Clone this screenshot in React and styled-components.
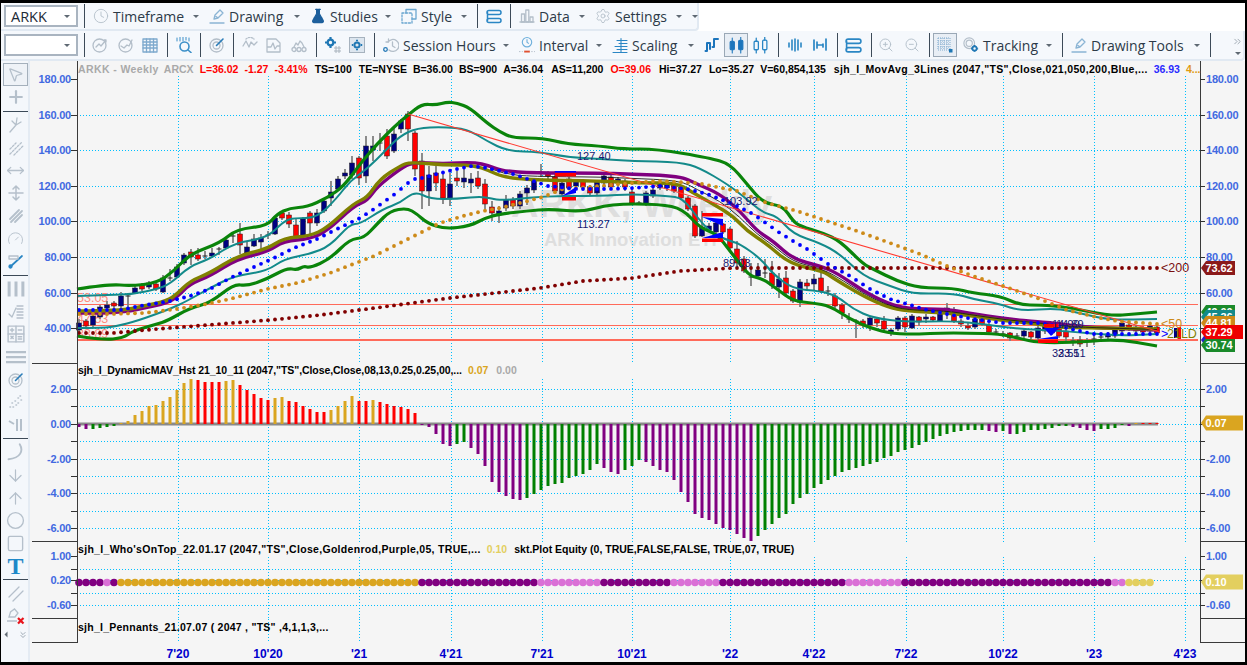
import React from 'react';
import styled, { createGlobalStyle } from 'styled-components';
import {
  Clock, FlaskConical, Settings, MousePointer2, Plus, MoveHorizontal,
  ArrowDown, ArrowUp, Circle, Square, ChevronsRight, ZoomIn, ZoomOut, Gauge
} from 'lucide-react';

const GlobalStyle = createGlobalStyle`
  html, body { margin: 0; padding: 0; background: #000; }
  #root { width: 1247px; height: 665px; overflow: hidden; }
`;

/* ---------- data, all in screen pixels of the reference ---------- */
const barX = i => 79 + 7 * i;
const BAR_COUNT = 155;

const greenTop = [[77,288],[110,283],[130,285],[157,282],[174,270],[190,253],[220,242],[237,228],[267,225],[277,213],[290,207],[307,206],[327,197],[344,185],[360,163],[377,143],[395,125],[408,114],[422,103],[436,104],[447,101],[457,102],[470,107],[487,122],[500,131],[513,137],[543,137],[567,143],[600,145],[623,148],[657,148],[710,157],[730,163],[747,183],[763,202],[783,205],[793,220],[800,225],[823,232],[840,240],[863,263],[873,268],[897,280],[920,287],[953,287],[973,292],[1000,295],[1020,304],[1040,304],[1067,306],[1110,315],[1135,313],[1157,311]];
const tealTop = [[77,295],[110,294],[134,293],[157,288],[170,283],[190,265],[210,258],[234,242],[267,237],[284,220],[294,217],[317,217],[337,197],[350,180],[367,168],[385,150],[400,135],[417,127],[443,126],[467,128],[487,140],[507,150],[540,151],[567,156],[600,158],[633,160],[680,161],[700,167],[727,183],[743,195],[763,212],[777,215],[793,233],[820,242],[840,253],[863,275],[890,285],[913,293],[953,292],[973,298],[1000,303],[1020,310],[1057,307],[1083,313],[1110,319],[1157,318]];
const purpleBand = [[77,312],[120,312],[144,307],[167,302],[177,296],[190,283],[210,275],[237,258],[267,251],[284,240],[310,238],[327,230],[354,205],[367,200],[377,186],[400,168],[413,161],[443,163],[473,161],[490,165],[503,170],[533,172],[600,172],[627,173],[680,175],[697,183],[720,193],[740,210],[757,230],[773,240],[793,258],[820,265],[837,272],[863,290],[887,302],[907,308],[947,308],[967,312],[1007,318],[1040,321],[1053,322],[1083,326],[1133,328],[1157,329]];
const oliveBand = [[77,310],[120,310],[144,305],[167,300],[177,293],[190,280],[210,272],[237,255],[267,248],[284,237],[310,235],[327,227],[354,202],[367,197],[380,178],[400,165],[410,161],[443,164],[473,164],[490,170],[503,176],[533,179],[600,180],[640,182],[677,182],[690,190],[713,203],[733,215],[747,230],[767,243],[790,263],[823,270],[833,277],[863,295],[887,306],[907,310],[947,312],[973,315],[1007,320],[1040,323],[1050,326],[1100,327],[1157,328]];
const tealLow = [[77,327],[103,327],[117,325],[137,320],[170,308],[187,300],[210,287],[234,275],[267,270],[284,258],[310,253],[330,245],[350,223],[360,223],[383,208],[400,202],[415,190],[430,198],[457,198],[483,195],[500,200],[543,195],[600,195],[633,193],[667,195],[683,197],[700,220],[713,233],[730,240],[740,243],[760,257],[773,273],[793,288],[820,290],[837,295],[853,308],[873,317],[907,321],[953,320],[983,323],[1017,328],[1067,330],[1117,335],[1157,333]];
const greenLow = [[77,335],[103,339],[123,337],[133,330],[157,323],[167,320],[190,307],[210,302],[234,283],[247,285],[267,278],[287,267],[297,269],[304,265],[310,267],[330,258],[350,238],[364,237],[377,223],[390,210],[407,207],[417,213],[427,222],[445,228],[470,225],[485,217],[500,213],[527,210],[550,208],[583,211],[610,203],[660,203],[683,208],[700,227],[717,233],[730,250],[740,263],[750,275],[763,278],[777,288],[793,300],[813,302],[830,305],[850,318],[870,327],[893,333],[920,333],[940,332],[967,332],[1000,333],[1017,337],[1040,342],[1083,341],[1117,338],[1157,345]];
const blueDots = [[77,309],[120,309],[140,305],[170,300],[190,295],[210,288],[234,275],[254,266],[274,257],[294,247],[317,238],[337,228],[360,217],[374,208],[395,193],[408,182],[415,178],[422,177],[437,173],[457,168],[472,165],[487,167],[500,170],[513,173],[548,185],[577,188],[610,188],[633,187],[660,185],[687,188],[707,193],[733,203],[753,213],[780,232],[793,240],[807,248],[828,263],[850,275],[870,288],[890,298],[907,303],[927,309],[947,313],[973,318],[1003,322],[1040,322],[1067,327],[1093,333],[1157,333]];
const goldDots = [[77,313],[110,313],[144,312],[177,308],[207,303],[234,297],[267,288],[297,282],[330,272],[374,255],[440,222],[463,215],[483,210],[500,207],[520,202],[543,196],[563,188],[600,185],[633,182],[657,180],[697,182],[737,190],[767,202],[797,210],[857,230],[890,242],[920,253],[947,265],[973,275],[1003,285],[1040,298],[1067,309],[1100,317],[1117,320],[1157,323]];
const maroonDots = [[79,332],[113,332],[157,328],[220,323],[270,319],[320,314],[367,308],[450,297],[540,287],[583,280],[633,277],[680,270],[733,267],[1157,267]];

// [body top, body bottom, wick top, wick bottom, navy?]
const candles = [
  [322,329,318,332,1],[320,325,318,328,0],[315,324,312,326,1],[306,316,304,318,1],[304,307,300,310,1],[302,305,300,308,0],[295,305,291,309,1],[295,295,292,311,1],
  [287,292,285,293,1],[284,288,282,290,0],[282,286,280,288,1],[283,288,281,290,0],[277,291,274,292,1],[277,277,268,280,1],[266,276,263,277,1],[254,262,252,264,1],
  [251,256,248,264,0],[254,258,247,260,0],[255,255,250,258,1],[252,255,247,256,1],[248,248,246,254,1],[239,247,236,248,1],[235,235,233,242,1],[233,244,222,253,0],
  [246,252,241,256,1],[238,245,233,246,1],[237,241,233,248,1],[234,234,230,238,1],[217,233,215,234,1],[212,217,210,219,0],[214,223,211,227,0],[224,236,218,238,0],
  [218,236,216,237,1],[212,222,210,234,0],[212,222,208,225,1],[200,210,198,212,1],[191,197,180,205,1],[178,188,175,190,1],[172,175,168,178,1],[162,174,155,178,1],
  [157,177,155,184,0],[145,175,135,182,1],[145,149,135,160,1],[142,142,132,150,1],[135,155,128,158,0],[133,150,127,152,1],[120,128,118,132,1],[113,128,110,140,0],
  [132,168,130,175,0],[160,190,152,208,0],[174,190,165,205,1],[172,182,165,190,0],[178,197,172,203,0],[183,197,172,205,1],[177,180,170,185,0],[177,181,167,187,1],
  [178,182,172,192,1],[177,185,170,188,0],[183,203,178,208,0],[206,212,200,220,0],[210,214,205,222,1],[199,207,194,210,1],[199,205,196,208,0],[193,205,190,208,1],
  [187,192,184,204,1],[180,189,178,192,1],[172,172,163,176,1],[172,175,170,178,0],[176,190,170,192,0],[182,193,178,195,1],[178,187,176,189,0],[180,185,178,188,1],
  [180,186,178,188,0],[186,192,184,194,0],[181,192,179,194,1],[175,182,172,184,1],[176,186,172,188,0],[178,182,176,186,1],[180,186,178,190,0],[191,202,188,204,0],
  [202,202,200,203,1],[192,203,190,205,1],[189,195,185,197,1],[183,187,181,189,1],[183,187,181,190,1],[184,190,182,192,0],[186,197,184,199,0],[197,208,195,210,0],
  [205,235,203,237,0],[226,235,210,236,1],[225,229,222,231,1],[222,231,218,233,1],[223,231,222,233,0],[228,247,226,250,0],[248,262,240,265,0],[258,270,255,272,0],
  [276,276,262,285,1],[269,275,262,277,1],[272,272,258,277,1],[272,284,260,288,0],[278,286,272,297,1],[277,292,270,296,0],[290,300,288,302,0],[281,301,278,306,1],
  [282,285,278,290,0],[278,283,273,290,1],[277,290,272,292,0],[290,290,285,295,1],[295,305,292,307,0],[304,312,302,318,0],[318,318,312,322,1],[320,320,318,337,1],
  [320,323,318,327,0],[317,324,316,330,1],[318,322,316,326,0],[320,328,315,330,0],[329,332,327,335,1],[317,328,315,330,1],[317,326,315,331,0],[315,327,313,328,1],
  [316,321,315,325,0],[316,318,313,322,1],[316,319,315,321,0],[310,320,308,321,1],[307,311,302,318,1],[312,320,306,322,0],[320,323,318,326,0],[325,327,322,329,0],
  [318,326,316,328,1],[318,323,316,325,0],[324,331,322,333,0],[331,331,328,334,1],[333,333,330,336,1],[332,337,331,340,0],[335,335,332,338,1],[330,335,327,337,1],
  [331,336,330,338,0],[327,337,325,339,1],[322,330,320,333,1],[326,332,324,334,0],[328,335,326,337,0],[330,336,328,340,0],[340,340,336,345,1],[339,343,335,346,0],
  [340,340,337,346,1],[338,338,334,344,1],[336,336,333,340,1],[333,336,331,338,1],[329,335,327,337,1],[322,330,320,331,1],[324,328,322,330,0],[326,330,324,332,0],
  [327,331,325,333,0],[325,330,323,332,1],[326,332,324,334,0]
];

const histogram = [
  -3,-5,-5,-4,-3,-2,1,3,9,13,18,19,23,27,34,41,45,44,42,42,42,43,44,39,34,30,26,24,26,27,23,22,18,15,12,12,14,18,23,28,23,23,24,22,20,18,17,15,11,
  -1,-3,-10,-20,-22,-20,-18,-24,-30,-42,-58,-68,-72,-75,-76,-74,-70,-66,-62,-60,-59,-54,-52,-50,-46,-40,-44,-48,-50,-46,-42,-36,-38,-42,-46,-48,-56,-68,-78,-90,-94,-96,-100,-104,-106,-110,-114,-117,-112,-106,-100,-94,-90,-80,-74,-70,-64,-60,-56,-52,-48,-46,-44,-42,-40,-38,-34,-32,-28,-26,-24,-21,-18,-15,-12,-10,-8,-7,-6,-6,-6,-7,-8,
  -7,-10,-10,-8,-6,-6,-5,-4,-2,-2,-3,-4,-6,-7,-5,-5,-4,-1,-2,1,1,1,1
];

const dotRuns = [
  [4,'#800080'],[1,'#da70d6'],[1,'#800080'],[43,'#daa520'],[17,'#800080'],[9,'#da70d6'],[10,'#800080'],[7,'#da70d6'],[18,'#800080'],
  [8,'#da70d6'],[30,'#800080'],[2,'#da70d6'],[4,'#e3cf5f']
];

const dates = [[178,"7'20"],[268,"10'20"],[359,"'21"],[451,"4'21"],[542,"7'21"],[632,"10'21"],[730,"'22"],[814,"4'22"],[906,"7'22"],[1003,"10'22"],[1094,"'23"],[1185,"4'23"]];

const sample = (points, x) => {
  if (x <= points[0][0]) return points[0][1];
  for (let i = 1; i < points.length; i++) {
    if (x <= points[i][0]) {
      const [x0, y0] = points[i - 1];
      const [x1, y1] = points[i];
      return y0 + ((y1 - y0) * (x - x0)) / (x1 - x0);
    }
  }
  return points[points.length - 1][1];
};
// rounded line through the midpoints, the study lines have no hard corners
const toCurve = points => {
  let d = `M${points[0][0]} ${points[0][1]}`;
  for (let i = 1; i < points.length - 1; i++) {
    const [x, y] = points[i];
    const [nx, ny] = points[i + 1];
    d += `Q${x} ${y} ${(x + nx) / 2} ${(y + ny) / 2}`;
  }
  const last = points[points.length - 1];
  return `${d}L${last[0]} ${last[1]}`;
};
const blackBand = purpleBand.filter(p => p[0] >= 490).map(p => [p[0], (p[1] + sample(oliveBand, p[0])) / 2]);

/* ---------- page ---------- */
const Frame = styled.div`
  width: 1247px;
  height: 665px;
  box-sizing: border-box;
  padding: 3px 2px 3px 1px;
  background: #000;
`;
const Window = styled.div`
  height: 100%;
  background: #fff;
  display: flex;
  flex-direction: column;
  overflow: hidden;
  font-family: "Open Sans", "Liberation Sans", sans-serif;
`;
const Toolbar = styled.div`
  height: ${p => p.$h}px;
  width: ${p => p.$w}px;
  box-sizing: border-box;
  flex: none;
  display: flex;
  align-items: center;
  padding-left: 3px;
  background: #f5f8fc;
  border: solid #e1e9f2;
  border-width: 0 2px 2px 0;
  border-radius: 0 0 4px 0;
`;
const ComboBox = styled.div`
  width: 74px;
  height: 22px;
  flex: none;
  box-sizing: border-box;
  border: 2px solid #a9b4c0;
  background: #fff;
  display: flex;
  align-items: center;
  justify-content: space-between;
  padding: 0 6px 0 5px;
  font-size: 14.5px;
  color: #1d2a36;
`;
const Sep = styled.div`
  width: 1px;
  height: 24px;
  flex: none;
  background: #3c4a58;
  margin-left: ${p => p.$ml ?? 8}px;
`;
const Caret = styled.span`
  display: block;
  flex: none;
  width: 0;
  height: 0;
  border: solid transparent;
  border-width: 3.5px 3px 0;
  border-top-color: #5f6973;
`;
const Menu = styled.div`
  width: ${p => p.$w}px;
  box-sizing: border-box;
  flex: none;
  display: flex;
  align-items: center;
  gap: 4px;
  padding-right: 10px;
  margin-left: ${p => p.$ml ?? 0}px;
  font-size: 14px;
  color: #2c3a48;
  white-space: nowrap;
  ${Caret} { margin-left: auto; }
`;
const Tool = styled.span`
  display: flex;
  flex: none;
  align-items: center;
  justify-content: center;
  margin-left: ${p => p.$ml ?? 8}px;
  width: ${p => p.$w ?? 16}px;
  height: ${p => (p.$on ? 24 : 20)}px;
  box-sizing: border-box;
  color: ${p => p.$c ?? '#b3bec9'};
  ${p => p.$on && 'border: 1px solid #9aa8b6; background: #e8eef5;'}
`;
const Overflow = styled.div`
  margin-left: 21px;
  width: 14px;
  display: flex;
  flex-direction: column;
  align-items: center;
  gap: 5px;
  color: #9aa4ae;
`;
const Workspace = styled.div`
  flex: 1;
  display: flex;
  min-height: 0;
`;
const Toolbox = styled.div`
  width: 29px;
  flex: none;
  box-sizing: border-box;
  padding: 2px 0 0 2px;
  background: #f4f7fb;
  border-right: 2px solid #e4ebf3;
  display: flex;
  flex-direction: column;
  align-items: center;
`;
const BoxTool = styled.span`
  height: ${p => (p.$on ? 23 : 22.7)}px;
  width: 25px;
  flex: none;
  box-sizing: border-box;
  display: flex;
  align-items: center;
  justify-content: center;
  color: ${p => p.$c ?? '#b5c0cb'};
  ${p => p.$on && 'border: 1px solid #a4b0bc; background: #eef2f7;'}
`;
const BoxRule = styled.div`
  width: 25px;
  height: 1px;
  flex: none;
  background: #3c4a58;
  margin: 2px 0;
`;
const TextTool = styled(BoxTool)`
  font: bold 24px "Liberation Serif", serif;
`;
const BoxNav = styled.div`
  margin-top: 2px;
  width: 25px;
  display: flex;
  justify-content: space-between;
  align-items: center;
  color: #8d99a5;
`;
const LeftCaret = styled(Caret)`
  transform: rotate(90deg);
`;
const DownChevrons = styled(ChevronsRight)`
  transform: rotate(90deg);
`;
const Chart = styled.div`
  flex: 1;
  background: #f5f5f5;
  display: flex;
  flex-direction: column;
`;
const Pane = styled.div`
  position: relative;
  height: ${p => p.$h}px;
  flex: none;
`;
const PaneSvg = styled.svg`
  display: block;
`;
const PaneTitle = styled.div`
  position: absolute;
  top: ${p => p.$top ?? 2}px;
  left: 48px;
  display: flex;
  gap: 6px;
  font: bold 10.5px/13px "Liberation Sans", sans-serif;
  color: #000;
  white-space: nowrap;
`;
const Reading = styled.span`
  color: ${p => p.$c ?? '#000'};
  margin-left: ${p => p.$ml ?? 0}px;
  letter-spacing: ${p => p.$ls ?? 0}px;
`;
const ScaleText = styled.text`
  font: bold 11px "Liberation Sans", sans-serif;
  letter-spacing: -0.2px;
  fill: #4169e1;
`;
const DateText = styled.text`
  font: bold 12px "Liberation Sans", sans-serif;
  fill: #0000cd;
  text-anchor: middle;
`;
const TagText = styled.text`
  font: bold 11px "Liberation Sans", sans-serif;
  letter-spacing: -0.1px;
  fill: #fff;
`;
const ChartText = styled.text`
  font: 11px "Liberation Sans", sans-serif;
  fill: ${p => p.$c ?? '#191970'};
`;
const StudyLabel = styled.text`
  font: 12.5px "Liberation Sans", sans-serif;
  fill: ${p => p.$c};
`;
const Watermark = styled.text`
  font: bold ${p => p.$size}px "Liberation Sans", sans-serif;
  fill: #dedede;
`;

/* ---------- small drawn icons ---------- */
const Ico = ({ children, w = 16, h = 16, fill = 'none', sw = 1.3 }) => (
  <svg width={w} height={h} viewBox="0 0 16 16" fill={fill} stroke="currentColor" strokeWidth={sw} strokeLinecap="round" strokeLinejoin="round">
    {children}
  </svg>
);
const LayoutIcon = () => (
  <Ico w={17} h={17} sw={1.5}>
    <path d="M3 2h10a1.5 1.5 0 0 1 0 4H3a1.5 1.5 0 0 1 0-4zM3 10h10a1.5 1.5 0 0 1 0 4H3a1.5 1.5 0 0 1 0-4zM1.5 4v8" />
  </Ico>
);
const CandlesFilled = () => (
  <Ico w={17} h={17} fill="currentColor" sw={1}>
    <path d="M4 1v14M12 0v15" /><rect x="2" y="4" width="4" height="8" rx="1" /><rect x="10" y="3" width="4" height="9" rx="1" />
  </Ico>
);
const CandlesOutline = () => (
  <Ico w={17} h={17} sw={1.2}>
    <path d="M4 1v3M4 12v3M12 0v3M12 12v3" /><rect x="2" y="4" width="4" height="8" rx="1" /><rect x="10" y="3" width="4" height="9" rx="1" />
  </Ico>
);
const StepChart = () => (
  <Ico sw={2}><path d="M3 14V6h3v6M3 14H1.5M10 10V2h4M10 10H8.5" /></Ico>
);
const WaveBars = () => (
  <Ico sw={1.6}><path d="M2 6v4M5 3v10M8 2v12M11 3v10M14 6v4" /></Ico>
);
const WaveGap = () => (
  <Ico sw={1.7}><path d="M2 3v10M5 5v6M11 7v3M14 2v11M6 8h4" /></Ico>
);
const DataIcon = () => (
  <Ico><path d="M1 14h14" /><rect x="2.5" y="6" width="3" height="8" /><rect x="6.8" y="2" width="3" height="12" /><rect x="11" y="9" width="3" height="5" /></Ico>
);
const StyleIcon = () => (
  <Ico><rect x="1" y="5" width="10" height="10" strokeDasharray="2 1.6" /><path d="M5 5V1.5h10V11h-4" /></Ico>
);
const NibIcon = () => (
  <Ico><path d="M5 11l1-4 5-5 3 3-5 5zM7 8.5l1.5 1M1 15h14" /></Ico>
);
const ChartCircle = ({ up }) => (
  <Ico><circle cx="7.5" cy="8.5" r="6.5" /><path d={up ? 'M4 10l3-3 2 2 5-6M12 3h2v2' : 'M3 9l3 2 3-3 2 1 3-6'} /></Ico>
);
const GridIcon = () => (
  <Ico><rect x="1" y="2" width="14" height="13" /><path d="M1 5h14M1 8h14M1 11h14M4.5 2v13M8 2v13M11.5 2v13" /></Ico>
);
const SearchGrid = () => (
  <Ico sw={1.6}><path d="M1 1v3M4 0v4M7 0v4M10 0v3M13 1v3" strokeWidth="1" /><circle cx="8.5" cy="9.5" r="4.5" /><path d="M12 13l3 2.5" /></Ico>
);
const RadarIcon = () => (
  <Ico><circle cx="7.5" cy="8.5" r="6.5" /><circle cx="7.5" cy="8.5" r="3.5" /><path d="M7.5 8.5L14 2" stroke="#2a7cb8" strokeWidth="1.6" /></Ico>
);
const PulseIcon = () => (
  <Ico><path d="M1 9l3-5 3 6 2-5 3 3 3-3" /><path d="M4 2a6 6 0 0 1 8 0" strokeDasharray="1.4 1.4" /></Ico>
);
const BoxPulse = () => (
  <Ico><path d="M1 15V2h9l4 4v9zM1 10h4l2-4 2 6 2-3h3" /></Ico>
);
const NetIcon = () => (
  <Ico><circle cx="3" cy="12.5" r="2" /><circle cx="8" cy="12.5" r="2" /><circle cx="13" cy="12.5" r="2" /><path d="M3 10l2-4 2 2 2-4 2 2 2 4" /></Ico>
);
const GearHash = () => (
  <svg width="16" height="16" viewBox="0 0 16 16">
    <g fill="none" stroke="#1f77b4" strokeWidth="2.2"><circle cx="5.5" cy="5.5" r="2.8" /><path d="M5.5 0v2M5.5 9v2M0 5.5h2M9 5.5h2" /></g>
    <path d="M11 9v7M14 9v7M9 11h7M9 14h7" stroke="#aab4be" strokeWidth="1" />
  </svg>
);
const GearBox = () => (
  <svg width="16" height="16" viewBox="0 0 16 16">
    <rect x="0.5" y="0.5" width="15" height="15" fill="#dde6ef" stroke="#a6b2be" />
    <g fill="none" stroke="#1f77b4" strokeWidth="2"><circle cx="8" cy="8" r="2.6" /><path d="M8 2.8v1.4M8 11.8v1.4M2.8 8h1.4M11.8 8h1.4" /></g>
  </svg>
);
const SessionIcon = () => (
  <Ico><path d="M5 5a6 6 0 1 1 1 8" /><path d="M3 5h2.5V2M9.5 5v4l2.5 1.5" /><circle cx="2.5" cy="12.5" r="1.8" stroke="#2a7cb8" /></Ico>
);
const IntervalIcon = () => (
  <svg width="17" height="18" viewBox="0 0 17 18" fill="none">
    <circle cx="8.5" cy="6" r="5" stroke="#6fb0dc" strokeWidth="1.2" />
    <path d="M8.5 3v3l2 1.5" stroke="#6fb0dc" strokeWidth="1.2" />
    <path d="M0 16h4M13 16h4" stroke="#b3bec9" strokeDasharray="1.5 1.5" />
    <path d="M5.5 16h6" stroke="#e05030" strokeWidth="2" />
  </svg>
);
const ScalingIcon = () => (
  <Ico w={17} h={17} sw={1.1}><path d="M9 1v14M5 3h10M7 6h8M3 9h12M5 12h10M1 15h14" /></Ico>
);
const TrackingIcon = () => (
  <svg width="18" height="18" viewBox="0 0 18 18" fill="none">
    <g stroke="#b3bec9" strokeWidth="1.3"><circle cx="7" cy="7" r="6" /><circle cx="7" cy="7" r="3.5" /></g>
    <g stroke="#1f77b4" strokeWidth="2"><circle cx="13" cy="13" r="2.4" /><path d="M13 9v1M13 16v1M9 13h1M16 13h1" /></g>
  </svg>
);
const GridPicked = () => (
  <svg width="16" height="16" viewBox="0 0 16 16" fill="none" stroke="#7ea9cd" strokeDasharray="1 1">
    <path d="M1 1h12M1 4h12M1 7h12M1 10h12M1 13h12M1 1v12M4 1v12M7 1v12M10 1v12M13 1v12" />
    <rect x="12" y="12" width="3.5" height="3.5" fill="#1f77b4" stroke="none" />
  </svg>
);
const Pitchfork = () => (
  <Ico><path d="M2 15l6-7M8 8l1-7M8 8l5-3M8 8l-4-4" /></Ico>
);
const DashedDiag = () => (
  <Ico><path d="M2 14L14 2M6 15l9-9M2 9l6-6" strokeDasharray="2 1.5" /></Ico>
);
const VertArrow = () => (
  <Ico sw={1.5}><path d="M8 1v14M5 4l3-3 3 3M5 12l3 3 3-3M1 8h14" /></Ico>
);
const Triple = () => (
  <Ico sw={1.8}><path d="M2 11L11 2M3 14L14 3M7 14l7-7" /></Ico>
);
const BlueLine = () => (
  <Ico><path d="M2 14L14 3" strokeWidth="1.7" /><circle cx="2.5" cy="13.5" r="1.5" fill="currentColor" /><path d="M1 3h9v3H1z" stroke="#b5c0cb" /></Ico>
);
const ThreeBars = () => (
  <Ico w={20} h={20} sw={2.4}><path d="M2.5 2v12M8 2v12M13.5 2v12" strokeLinecap="butt" /></Ico>
);
const FibIcon = () => (
  <Ico><path d="M1 10l3 3 4-9M9 2h6M9 5h6M9 8h6M9 11h6M9 14h6" /></Ico>
);
const CalcIcon = () => (
  <Ico w={18} h={18}><rect x="1" y="1" width="14" height="14" /><path d="M8 1v14M1 8h14M3 4.5h3M4.5 3v3M10 4.5h3M3.5 10l2 2M5.5 10l-2 2M10 10.5h3M10 12.5h3" /></Ico>
);
const ThreeLines = () => (
  <Ico w={20} h={20} sw={1.8}><path d="M0 4h16M0 8h16M0 12h16" strokeLinecap="butt" /></Ico>
);
const Scatter = () => (
  <Ico sw={1.6}><path d="M2 13h.5M4 9h.5M5 13h.5M7 7h.5M8 11h.5M10 4h.5M10 9h.5M12 2h.5M13 6h.5" /></Ico>
);
const LineBars = () => (
  <Ico sw={2}><path d="M1 4l5 3M9 2v12M13 2v12" strokeLinecap="butt" /></Ico>
);
const ArcIcon = () => (
  <Ico w={20} h={20} sw={1.5}><path d="M11 1c3 5 1 11-9 12" /></Ico>
);
const PairDiag = () => (
  <Ico><path d="M1 11L11 1M5 15L15 5" /></Ico>
);
const EraseDraw = () => (
  <svg width="18" height="18" viewBox="0 0 18 18" fill="none" stroke="#b5c0cb" strokeWidth="1.3">
    <path d="M2 10l1.5-5 4-3 3.5 4-3 4zM0 14h10" />
    <path d="M11 11l5.5 5.5M16.5 11L11 16.5" stroke="#e8141c" strokeWidth="2.2" />
  </svg>
);

/* ---------- chart parts ---------- */
const Axes = ({ top, height, ticks = [], minor = [], rightHidden = [] }) => (
  <g>
    <path d={`M77 ${top}V${top + height}M1200 ${top}V${top + height}`} stroke="#3a3a3a" strokeWidth="1" shapeRendering="crispEdges" />
    <path d={`M32 ${top + height - 0.5}H77M1200 ${top + height - 0.5}H1245`} stroke="#3a3a3a" strokeWidth="1" shapeRendering="crispEdges" />
    {ticks.map(([y, label]) => (
      <g key={label}>
        <path d={`M71 ${y}H77M1200 ${y}H1205`} stroke="#333" shapeRendering="crispEdges" />
        <ScaleText x="71" y={y + 3.5} textAnchor="end">{label}</ScaleText>
        {!rightHidden.includes(label) && <ScaleText x="1206" y={y + 3.5}>{label}</ScaleText>}
      </g>
    ))}
    {minor.map(y => (
      <path key={y} d={`M71 ${y}H77M1200 ${y}H1205`} stroke="#333" shapeRendering="crispEdges" />
    ))}
  </g>
);
const Grid = ({ rows, from, to }) => (
  <g stroke="#00bfff" strokeDasharray="1 2" shapeRendering="crispEdges">
    {rows.map(y => <path key={y} d={`M77 ${y}H1200`} />)}
    {dates.map(([x]) => <path key={x} d={`M${x} ${from}V${to}`} />)}
  </g>
);
const PriceTag = ({ y, h = 14, w = 29, color, label }) => (
  <g>
    <path d={`M1201 ${y}l5 ${-h / 2}h${w}v${h}h${-w}z`} fill={color} />
    <TagText x="1205.5" y={y + 4}>{label}</TagText>
  </g>
);
const Series = ({ points, color, width }) => (
  <path d={toCurve(points)} fill="none" stroke={color} strokeWidth={width} strokeLinejoin="round" />
);
const Dots = ({ points, color, r }) => (
  <g fill={color}>
    {Array.from({ length: BAR_COUNT }, (_, i) => (
      <circle key={i} cx={barX(i)} cy={sample(points, barX(i))} r={r} />
    ))}
  </g>
);
const Candle = ({ x, c }) => {
  const [top, bottom, high, low, up] = c;
  const flat = top === bottom;
  return (
    <g>
      <path d={`M${x} ${high}V${low}`} stroke="#808080" strokeWidth="1.8" />
      {flat
        ? <path d={`M${x - 2.5} ${top}h5`} stroke="#222" strokeWidth="1" />
        : <rect x={x - 2.5} y={top} width="5" height={bottom - top} fill={up ? '#000080' : '#ff0000'} stroke="#222" strokeWidth="0.5" />}
    </g>
  );
};
const Pennant = ({ bars, wedges }) => (
  <g>
    {wedges.map(d => <path key={d} d={d} fill="#0000ff" />)}
    {bars.map(([x, y, w]) => <rect key={y} x={x} y={y} width={w} height="3.5" fill="#ff0000" />)}
  </g>
);

const PricePane = () => (
  <PaneSvg width="1215" height="303" viewBox="30 60 1215 303">
    <Watermark x="511" y="216" $size={38}>ARKK, Weekly</Watermark>
    <Watermark x="544" y="245" $size={18.5}>ARK Innovation ETF</Watermark>
    <Grid rows={[114, 149, 185, 220, 256, 292, 327]} from={75} to={363} />
    <path d="M77 303.5H1198M77 324.5H1198" stroke="#ff6a5a" strokeWidth="1" />
    <path d="M77 339H1198" stroke="#ff6a5a" strokeWidth="2" />
    <StudyLabel x="77" y="301" $c="#ff8b7f">53.05</StudyLabel>
    <StudyLabel x="77" y="322" $c="#ff8b7f">47.53</StudyLabel>
    <StudyLabel x="77" y="337" $c="#ff8b7f">33.89</StudyLabel>
    {candles.map((c, i) => <Candle key={i} x={barX(i)} c={c} />)}
    <Series points={purpleBand} color="#800080" width={3.4} />
    <Series points={oliveBand} color="#808000" width={3.4} />
    <Series points={blackBand} color="#1a1a1a" width={0.9} />
    <Series points={tealTop} color="#138a8a" width={2} />
    <Series points={tealLow} color="#138a8a" width={2} />
    <Series points={greenTop} color="#0a840a" width={3.2} />
    <Series points={greenLow} color="#0a840a" width={3.2} />
    <path d="M408 113L1160 331" stroke="#ff3a30" strokeWidth="1.1" />
    <Dots points={maroonDots} color="#800000" r={1.9} />
    <Dots points={goldDots} color="#cd8a18" r={1.9} />
    <Dots points={blueDots} color="#0000ff" r={1.9} />
    <Pennant
      bars={[[555, 172, 21], [562, 196, 14]]}
      wedges={['M555 170h21v1.5h-21z', 'M562 195L576 186V192z']}
    />
    <Pennant
      bars={[[702, 212, 21], [702, 237.5, 21]]}
      wedges={['M702 216L723 218V225z', 'M702 237L723 231V237z']}
    />
    <Pennant
      bars={[[1044, 323, 15], [1038, 338.5, 20]]}
      wedges={['M1044 327h15l-8 8z', 'M1038 338l20-3v3z']}
    />
    <ChartText x="577" y="159">127.40</ChartText>
    <ChartText x="577" y="227">113.27</ChartText>
    <ChartText x="724" y="204">103.92</ChartText>
    <ChartText x="723" y="266">89.03</ChartText>
    <ChartText x="1052" y="327">14.99</ChartText>
    <ChartText x="1056" y="327">14.89</ChartText>
    <ChartText x="1052" y="356">32.51</ChartText>
    <ChartText x="1058" y="356">33.51</ChartText>
    <rect x="1174" y="327" width="3.5" height="10" fill="#000080" />
    <rect x="1177.5" y="326" width="3.5" height="12" fill="#ff0000" />
    <StudyLabel x="1161" y="271" $c="#7a1010">&lt;200</StudyLabel>
    <StudyLabel x="1161" y="327" $c="#cd8a18">&lt;50</StudyLabel>
    <StudyLabel x="1161" y="337" $c="#0000ff">&gt;</StudyLabel>
    <StudyLabel x="1167" y="337" $c="#808000">21LD</StudyLabel>
    <Axes
      top={60}
      height={303}
      ticks={[[78, '180.00'], [114, '160.00'], [149, '140.00'], [185, '120.00'], [220, '100.00'], [256, '80.00'], [292, '60.00'], [327, '40.00']]}
      rightHidden={['40.00']}
    />
    <PriceTag y={267} color="#8b1a1a" label="73.62" />
    <PriceTag y={311} color="#1a8a2a" label="49.00" />
    <PriceTag y={316} color="#138a8a" label="45.36" />
    <PriceTag y={322} color="#cd8a18" label="44.81" />
    <PriceTag y={339} color="#2222cc" label="36.93" />
    <PriceTag y={344} color="#1a8a2a" label="30.74" />
    <PriceTag y={331} w={37} color="#ee0000" label="37.29" />
  </PaneSvg>
);

const HistogramPane = () => (
  <PaneSvg width="1215" height="178" viewBox="30 363 1215 178">
    <Grid rows={[388, 405, 423, 440, 458, 475, 492, 510, 527]} from={378} to={541} />
    <path d="M77 423H1158" stroke="#8a8a8a" strokeWidth="3" />
    {histogram.map((v, i) => {
      const prev = i ? histogram[i - 1] : 0;
      const color = v >= 0 ? (v > prev ? '#daa520' : '#ff0000') : (v < prev ? '#800080' : '#008000');
      return (
        <rect key={i} x={barX(i) - 1.5} y={v > 0 ? 423 - v : 423} width="3" height={Math.abs(v)} fill={color} />
      );
    })}
    <Axes
      top={363}
      height={178}
      ticks={[[388, '2.00'], [423, '0.00'], [458, '-2.00'], [492, '-4.00'], [527, '-6.00']]}
      minor={[405, 440, 475, 510]}
      rightHidden={['0.00']}
    />
    <PriceTag y={422} h={15} w={37} color="#daa520" label="0.07" />
  </PaneSvg>
);

const DotsPane = () => {
  const colors = dotRuns.flatMap(([n, c]) => Array(n).fill(c));
  return (
    <PaneSvg width="1215" height="77" viewBox="30 541 1215 77">
      <Grid rows={[568, 579, 592, 604]} from={556} to={618} />
      {colors.map((c, i) => <circle key={i} cx={barX(i)} cy="581.5" r="3.8" fill={c} />)}
      <Axes
        top={541}
        height={77}
        ticks={[[555, '1.00'], [579, '0.20'], [604, '-0.60']]}
        minor={[568, 592]}
        rightHidden={['0.20']}
      />
      <PriceTag y={581} h={15} w={37} color="#e3cf5f" label="0.10" />
    </PaneSvg>
  );
};

const PennantsPane = () => (
  <PaneSvg width="1215" height="24" viewBox="30 618 1215 24">
    <Grid rows={[]} from={618} to={642} />
    <Axes top={618} height={24} />
  </PaneSvg>
);

const DateAxis = () => (
  <PaneSvg width="1215" height="17" viewBox="30 642 1215 17">
    {dates.map(([x, label]) => <DateText key={x} x={x} y="657">{label}</DateText>)}
  </PaneSvg>
);

const App = () => (
  <Frame>
    <GlobalStyle />
    <Window>
      <Toolbar $h={28} $w={698}>
        <ComboBox>ARKK<Caret /></ComboBox>
        <Sep $ml={6} />
        <Menu $w={116} $ml={8}><Tool $ml={0}><Clock size={16} strokeWidth={1.3} /></Tool>Timeframe<Caret /></Menu>
        <Menu $w={101}><Tool $ml={0} $c="#8ab4d4"><NibIcon /></Tool>Drawing<Caret /></Menu>
        <Menu $w={91}><Tool $ml={0} $c="#1d5f9c"><FlaskConical size={16} fill="currentColor" /></Tool>Studies<Caret /></Menu>
        <Menu $w={76}><Tool $ml={0} $c="#6aa6d0"><StyleIcon /></Tool>Style<Caret /></Menu>
        <Sep $ml={0} />
        <Tool $c="#2a86c4"><LayoutIcon /></Tool>
        <Sep />
        <Menu $w={76} $ml={8}><Tool $ml={0}><DataIcon /></Tool>Data<Caret /></Menu>
        <Menu $w={97}><Tool $ml={0}><Settings size={16} strokeWidth={1.3} /></Tool>Settings<Caret /></Menu>
        <Caret />
      </Toolbar>
      <Toolbar $h={30} $w={1244}>
        <ComboBox><span /><Caret /></ComboBox>
        <Sep $ml={6} />
        <Tool $ml={7}><ChartCircle up /></Tool>
        <Tool $ml={10}><ChartCircle /></Tool>
        <Tool $c="#7ea9cd"><GridIcon /></Tool>
        <Sep $ml={9} />
        <Tool $c="#3c8fc8"><SearchGrid /></Tool>
        <Sep />
        <Tool><RadarIcon /></Tool>
        <Sep />
        <Tool><PulseIcon /></Tool>
        <Tool><BoxPulse /></Tool>
        <Tool $ml={9}><NetIcon /></Tool>
        <Sep $ml={9} />
        <Tool><GearHash /></Tool>
        <Tool><GearBox /></Tool>
        <Sep $ml={9} />
        <Menu $w={136} $ml={8}><Tool $ml={0}><SessionIcon /></Tool>Session Hours<Caret /></Menu>
        <Menu $w={93}><Tool $ml={0}><IntervalIcon /></Tool>Interval<Caret /></Menu>
        <Menu $w={92}><Tool $ml={0} $c="#2a86c4"><ScalingIcon /></Tool>Scaling<Caret /></Menu>
        <Tool $ml={0} $c="#1c75bc"><StepChart /></Tool>
        <Tool $ml={4} $w={24} $on $c="#1c75bc"><CandlesFilled /></Tool>
        <Tool $ml={4} $w={17} $c="#2a86c4"><CandlesOutline /></Tool>
        <Sep $ml={9} />
        <Tool $c="#2a86c4"><WaveBars /></Tool>
        <Tool $ml={9} $c="#2a86c4"><WaveGap /></Tool>
        <Sep $ml={9} />
        <Tool $ml={7} $w={17} $c="#2a86c4"><LayoutIcon /></Tool>
        <Sep $ml={9} />
        <Tool $ml={6}><ZoomIn size={16} strokeWidth={1.4} /></Tool>
        <Tool $ml={10}><ZoomOut size={16} strokeWidth={1.4} /></Tool>
        <Sep $ml={9} />
        <Tool $ml={3} $w={24} $on><GridPicked /></Tool>
        <Menu $w={99} $ml={6}><Tool $ml={0}><TrackingIcon /></Tool>Tracking<Caret /></Menu>
        <Sep $ml={0} />
        <Menu $w={139} $ml={8}><Tool $ml={0} $c="#8ab4d4"><NibIcon /></Tool>Drawing Tools<Caret /></Menu>
        <Sep $ml={0} />
        <Overflow><ChevronsRight size={11} /><Caret /></Overflow>
      </Toolbar>
      <Workspace>
        <Toolbox>
          <BoxTool $on><MousePointer2 size={17} strokeWidth={1.8} /></BoxTool>
          <BoxTool><Plus size={20} strokeWidth={2.6} /></BoxTool>
          <BoxRule />
          <BoxTool><Pitchfork /></BoxTool>
          <BoxTool><DashedDiag /></BoxTool>
          <BoxTool><MoveHorizontal size={19} strokeWidth={1.6} /></BoxTool>
          <BoxTool><VertArrow /></BoxTool>
          <BoxTool><Triple /></BoxTool>
          <BoxTool><Gauge size={17} strokeWidth={1.3} /></BoxTool>
          <BoxTool $c="#2a86c4"><BlueLine /></BoxTool>
          <BoxRule />
          <BoxTool><ThreeBars /></BoxTool>
          <BoxTool><FibIcon /></BoxTool>
          <BoxTool><CalcIcon /></BoxTool>
          <BoxTool><ThreeLines /></BoxTool>
          <BoxTool><RadarIcon /></BoxTool>
          <BoxTool><Scatter /></BoxTool>
          <BoxTool><LineBars /></BoxTool>
          <BoxRule />
          <BoxTool><ArcIcon /></BoxTool>
          <BoxTool><ArrowDown size={19} strokeWidth={1.5} /></BoxTool>
          <BoxTool><ArrowUp size={19} strokeWidth={1.5} /></BoxTool>
          <BoxTool><Circle size={19} strokeWidth={1.7} /></BoxTool>
          <BoxTool><Square size={19} strokeWidth={1.7} /></BoxTool>
          <TextTool $c="#1e88c8">T</TextTool>
          <BoxRule />
          <BoxTool><PairDiag /></BoxTool>
          <BoxTool><EraseDraw /></BoxTool>
          <BoxNav><LeftCaret /><DownChevrons size={10} /></BoxNav>
        </Toolbox>
        <Chart>
          <Pane $h={303}>
            <PricePane />
            <PaneTitle>
              <Reading $c="#a9a9a9" $ls={0.4}>ARKK - Weekly</Reading>
              <Reading $c="#a9a9a9" $ml={-1}>ARCX</Reading>
              <Reading $c="#ff0000">L=36.02</Reading>
              <Reading $c="#ff0000">-1.27</Reading>
              <Reading $c="#ff0000">-3.41%</Reading>
              <Reading $ml={1}>TS=100</Reading>
              <Reading $ml={1}>TE=NYSE</Reading>
              <Reading>B=36.00</Reading>
              <Reading>BS=900</Reading>
              <Reading>A=36.04</Reading>
              <Reading $ml={2}>AS=11,200</Reading>
              <Reading $ml={1} $c="#ff0000">O=39.06</Reading>
              <Reading $ml={2}>Hi=37.27</Reading>
              <Reading $ml={1}>Lo=35.27</Reading>
              <Reading>V=60,854,135</Reading>
              <Reading $ml={2} $ls={0.32}>sjh_I_MovAvg_3Lines (2047,"TS",Close,021,050,200,Blue,...</Reading>
              <Reading $c="#2a2aff">36.93</Reading>
              <Reading $c="#e09a10">4...</Reading>
            </PaneTitle>
          </Pane>
          <Pane $h={178}>
            <HistogramPane />
            <PaneTitle $top={0}>
              <Reading $ls={-0.07}>sjh_I_DynamicMAV_Hst 21_10_11 (2047,"TS",Close,Close,08,13,0.25,0.25,00,...</Reading>
              <Reading $c="#daa520">0.07</Reading>
              <Reading $c="#a9a9a9" $ml={2}>0.00</Reading>
            </PaneTitle>
          </Pane>
          <Pane $h={77}>
            <DotsPane />
            <PaneTitle $top={1}>
              <Reading $ls={0.31}>sjh_I_Who'sOnTop_22.01.17 (2047,"TS",Close,Goldenrod,Purple,05, TRUE,...</Reading>
              <Reading $c="#e3cf5f">0.10</Reading>
              <Reading $ml={1}>skt.Plot Equity (0, TRUE,FALSE,FALSE, TRUE,07, TRUE)</Reading>
            </PaneTitle>
          </Pane>
          <Pane $h={24}>
            <PennantsPane />
            <PaneTitle>
              <Reading $ls={0.25}>sjh_I_Pennants_21.07.07 ( 2047 , "TS" ,4,1,1,3,...</Reading>
            </PaneTitle>
          </Pane>
          <DateAxis />
        </Chart>
      </Workspace>
    </Window>
  </Frame>
);

export default App;
